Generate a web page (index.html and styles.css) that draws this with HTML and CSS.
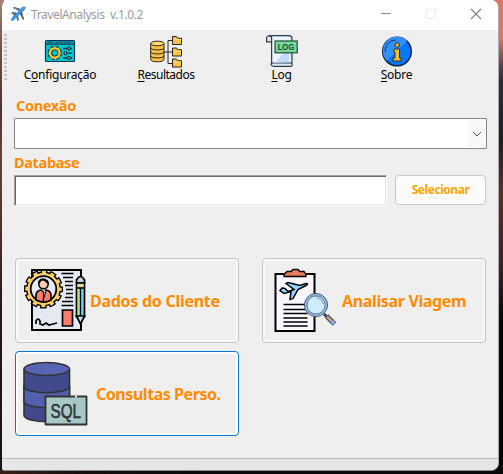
FILE: index.html
```html
<!DOCTYPE html>
<html lang="pt-BR">
<head>
<meta charset="utf-8">
<title>TravelAnalysis</title>
<link rel="stylesheet" href="styles.css">
</head>
<body>
<main class="window">
  <header class="titlebar">
    <svg class="app-icon" viewBox="0 0 16 16"><path d="M1 14 4 9 1 7 3 6 7 7 9 5 3 2 4 1 11 3 14 .8 15.5 1 15 3 12 6 14 13 13 14 10 8 8 10 9 14 7.5 15 6 11Z" fill="#344556"/><path d="M2.5 13.5 13.5 2" stroke="#3b9af0" stroke-width="3" stroke-linecap="round"/><path d="m4 2 6 2M12 7l1 5M2 7l3 1M7 11l1 3" stroke="#7894a7"/></svg>
    <h1 class="title">TravelAnalysis&nbsp; v.1.0.2</h1>
    <div class="controls">
      <svg viewBox="0 0 10 10"><path d="M0 4.5h10" stroke="#8a8a8a"/></svg>
      <svg viewBox="0 0 10 10"><rect x=".5" y=".5" width="9" height="9" rx="1" fill="none" stroke="#e9e9e9"/></svg>
      <svg viewBox="0 0 10 10"><path d="m0 0 10 10M10 0 0 10" stroke="#828282" stroke-width="1.1"/></svg>
    </div>
  </header>

  <nav class="toolbar">
    <span class="grip"></span>
    <button class="tool tool-config">
      <svg viewBox="0 0 32 32"><rect x="1.5" y="5.500" width="29" height="21" rx="1" fill="#00c8cc" stroke="#073654" stroke-width="1.2"/><path d="M2 6h28v3H2z" fill="#00969f"/><path d="M2 9.3h28" stroke="#073654"/><path d="M4 7.5h5M12 7.5h16" stroke="#06405a" stroke-dasharray="1 1"/><circle cx="10.8" cy="18" r="5.5" fill="none" stroke="#163e52" stroke-width="3.5" stroke-dasharray="2.7 1.62"/><circle cx="10.8" cy="18" r="4.1" fill="#00c8cc" stroke="#163e52" stroke-width="4"/><circle cx="10.8" cy="18" r="4.8" fill="none" stroke="#ffc72d" stroke-width="2.4"/><circle cx="10.8" cy="18" r="2.9" fill="#00c8cc" stroke="#163e52" stroke-width=".7"/><path d="M19 13.5h9M19 18.2h9M19 23h9" stroke="#073654" stroke-width="1.3"/><path d="M24 12h2v3h-2zM20.5 16.7h2v3h-2zM24 21.5h2v3h-2z" fill="#ffc72d" stroke="#073654"/></svg>
      <span>C<u>o</u>nfiguração</span>
    </button>
    <button class="tool tool-results">
      <svg viewBox="0 0 32 32"><g stroke="#29251d" stroke-width="1" fill="#fcc444"><path d="M.7 8.5v16c0 3 13.3 3 13.3 0v-16"/><ellipse cx="7.35" cy="8.5" rx="6.65" ry="2.3" fill="#ffdc72"/><path d="M.7 12.7c0 3 13.3 3 13.3 0M.7 16.7c0 3 13.3 3 13.3 0M.7 20.7c0 3 13.3 3 13.3 0" fill="none"/><path d="M14 17h8M22 5.5h-4v23h4" fill="none"/><path id="folder" d="M22.5 1.5h4l1 1.7h4v6.3h-9z"/><use href="#folder" y="11.5"/><use href="#folder" y="22.500"/></g><path d="M24 4.500h7M24 16h7M24 27h7" stroke="#ffe18a"/></svg>
      <span><u>R</u>esultados</span>
    </button>
    <button class="tool tool-log">
      <svg viewBox="0 0 32 32"><path d="M5.500 6.800H.6V3c0-3 5-2.500 5 0v25h19c2 0 2.400 3.400 0 3.400H8c-3.500 0-4-3.400-1.500-3.400M3 .7h20c2.500 0 3 1.300 3 3V28h-3" fill="#d9eaff" stroke="#343c48" stroke-width="1.200"/><path d="M7 2h17v25H7z" fill="#edf6ff"/><path d="M8 28 23 13v14z" fill="#c3dcfa"/><rect x="9" y="6" width="22.200" height="11.800" fill="#77d99a" stroke="#224d38" stroke-width="1.200"/><text x="11.700" y="15.100" font-size="8.800" textLength="16.500" lengthAdjust="spacingAndGlyphs">LOG</text></svg>
      <span><u>L</u>og</span>
    </button>
    <button class="tool tool-about">
      <svg viewBox="0 0 32 32"><circle cx="16" cy="16.500" r="14.300" fill="#0876f9" stroke="#10284a" stroke-width="1.500"/><path d="M6 26A14 14 0 0 1 26 6Z" fill="#3291ff"/><path d="M4 17c0-7 5-12 11-12" fill="none" stroke="#0c3266"/><circle cx="16.200" cy="10" r="2.200" fill="#ffc21c" stroke="#172b46"/><path d="M13 14h5.500v9h1.500v3h-8v-3h2v-6h-1z" fill="#ffc21c" stroke="#172b46" stroke-linejoin="round"/></svg>
      <span><u>S</u>obre</span>
    </button>
  </nav>

  <section class="form">
    <label class="field-label label-connection"><span>Conexão</span></label>
    <div class="combo"><span class="combo-arrow"><svg viewBox="0 0 10 6"><path d="m1 1 4 4 4-4" fill="none" stroke="#555"/></svg></span></div>
    <label class="field-label label-database"><span>Database</span></label>
    <div class="path-row"><input class="path" aria-label="Database"><button class="select">Selecionar</button></div>
  </section>

  <section class="actions">
    <button class="action action-client">
      <svg viewBox="0 0 70 70"><path d="M12 6h49v60H12z" fill="#e5e9f2" stroke="#000" stroke-width="2"/><path d="M41.500 9.500h12M43 13.500h10M45 17.500h8M45 21.500h8M46 25.500h7M46 29.500h7M45 33.500h8M42 37.500h11M41.500 41.500h12" stroke="#000" stroke-width="1.700"/><path d="M42.500 46h10v16h-10z" fill="#ff7c68" stroke="#000" stroke-width="1.700"/><circle cx="23.500" cy="25" r="16.800" fill="none" stroke="#000" stroke-width="5.500" stroke-dasharray="6.300 2.496" stroke-dashoffset="3.150"/><circle cx="23.500" cy="25" r="16" fill="#ffd067" stroke="#000" stroke-width="3"/><circle cx="23.500" cy="25" r="16.200" fill="none" stroke="#ffd067" stroke-width="4" stroke-dasharray="3.900 4.582" stroke-dashoffset="1.950"/><circle cx="23.500" cy="25" r="14.800" fill="none" stroke="#ffd067" stroke-width="2.500"/><circle cx="23.500" cy="25" r="12.800" fill="#e5e9f2" stroke="#000" stroke-width="1.800"/><path d="M16 36v-5q0-4 5-5l2.500 2 2.500-2q5 1 5 5v5q-7 4-15 0Z" fill="#ff7c68" stroke="#000" stroke-width="1.600"/><path d="m21 26 3 2-1 9 3-10" fill="#fff" stroke="#000"/><circle cx="23.500" cy="20" r="4.700" fill="#ffcbb3" stroke="#000" stroke-width="1.600"/><path d="M19 19q1-5 6-3l3 3" fill="none" stroke="#000" stroke-width="2"/><path d="M16 60v-3q2-4 4 0v3l3 1 3-2 3 2 4-1 4-1" fill="none" stroke="#000" stroke-width="1.700"/><path d="M56.500 19V16q4-7 8 0v3z" fill="#cbd1df" stroke="#000" stroke-width="1.700"/><path d="M56.500 19h8v34h-8z" fill="#64d5f3" stroke="#000" stroke-width="1.700"/><path d="M57.500 24h3v28h-3z" fill="#aedd75"/><path d="M60.500 24v28M56.500 24h8" stroke="#000" stroke-width="1.300"/><path d="M57.500 20h6v3h-6z" fill="#ffd37a"/><path d="M56.500 52h8l-4 8z" fill="#d4d9e5" stroke="#000" stroke-width="1.700"/></svg>
      <span>Dados do Cliente</span>
    </button>
    <button class="action action-trip">
      <svg viewBox="0 0 70 70"><path d="M8.500 10h39v57h-39z" fill="#f9f6fd" stroke="#000" stroke-width="2"/><path d="M17 12.500v-2l3-3h4l2-2h5l2 2h4l2 3v2z" fill="#e57e5b" stroke="#000" stroke-width="1.300"/><path d="m15 24 3 .5 3 3 6-2-8-6 2-1 12 3 6-2q3 0 0 2l-8 4-5 9-3 1 1-8-7 2-4-3z" fill="#91d5ff" stroke="#000" stroke-width="1.500"/><path d="M16.500 40.500H39M16.500 45.500h22M16.500 49.500h24M16.500 54h24M16.500 58h24M16.500 62h24" stroke="#000" stroke-width="1.500"/><circle cx="49" cy="41" r="11.500" fill="#ceecff" stroke="#30486b"/><circle cx="49" cy="41" r="10" fill="#ceecff" stroke="#87aed2" stroke-width="1.300"/><circle cx="49" cy="41" r="9" fill="none" stroke="#345072" stroke-width=".7"/><path d="M49 34q6 0 7 6" fill="none" stroke="#7592ab"/><path d="m57 50 3 3" stroke="#34495e" stroke-width="3"/><path d="m59.500 52 8 8" stroke="#30486b" stroke-width="5"/><path d="m60 52.500 5 5" stroke="#c99b80" stroke-width="3"/><path d="m65 57.500 2 2" stroke="#8dbce8" stroke-width="3.500"/></svg>
      <span>Analisar Viagem</span>
    </button>
    <button class="action action-query">
      <svg viewBox="0 0 70 70"><g stroke="#333337" stroke-width="1.600" stroke-linejoin="round"><path d="M4 12v46c0 9 45.500 9 45.500 0V12" fill="#414b8b"/><path d="M4 29c0 9 45.500 9 45.500 0v15c0 9-45.500 9-45.500 0z" fill="#5260b0"/><ellipse cx="26.750" cy="12" rx="22.750" ry="6.500" fill="#5964b5"/><path d="M25.500 39.500h41v28h-41z" fill="#a8c8c5" stroke-width="1.800"/></g><text x="30.500" y="60.500" font-size="20" textLength="30.500" lengthAdjust="spacingAndGlyphs">SQL</text><path d="M55 39.500h2" stroke="#efefef" stroke-width="2"/></svg>
      <span>Consultas Perso.</span>
    </button>
  </section>
  <footer class="status"></footer>
</main>
</body>
</html>
```
FILE: styles.css
```css
* { box-sizing: border-box; }

body {
  width: 503px;
  height: 474px;
  margin: 0;
  padding: 0 4px 3px 2px;
  overflow: hidden;
  font-family: "Noto Sans", sans-serif;
  background:
    linear-gradient(90deg, #392017 0, #180f0e 80px, #090909 200px) bottom / 100% 4px no-repeat,
    linear-gradient(#a98577 0, #7b6961 28px, #70483e 60px, #49342f 110px, #65443b 150px, #55332d 220px, #261b19 300px, #151212) left / 4px 100% no-repeat,
    linear-gradient(#d87860 0, #d87860 38px, #594451 65px, #302a38 82px, #211c23 140px, #573128 190px, #35221f 270px, #080808 320px, #050808) right / 12px 100% no-repeat;
}

button { margin: 0; padding: 0; font-family: inherit; }

svg { display: block; overflow: visible; fill: none; }

.window {
  display: flex;
  flex-direction: column;
  height: 471px;
  overflow: hidden;
  background: #efefef;
  border-right: 1px solid #aaa;
  border-bottom: 1px solid #8c8c8c;
  border-radius: 7px 8px 8px 3px;
}

.titlebar {
  display: flex;
  flex: none;
  align-items: center;
  height: 30px;
  padding: 0 14px 2px 8px;
  background: #fff;
}

.app-icon { width: 16px; height: 16px; }

.title {
  margin: 2px 0 0 5px;
  font-size: 12px;
  font-weight: 400;
  line-height: 16px;
  letter-spacing: -0.4px;
  color: #999;
  white-space: pre;
}

.controls { display: flex; gap: 35px; margin-left: auto; padding-right: 3px; }
.controls svg { width: 10px; height: 10px; }

.toolbar {
  display: grid;
  grid-template-columns: 4px 104px 108px 123px 107px;
  flex: none;
  height: 60px;
  padding-left: 2px;
}

.grip {
  width: 3px;
  height: 48px;
  margin-top: 4px;
  background: repeating-linear-gradient(#c2c2c2 0 2px, transparent 2px 4px);
}

.tool {
  display: flex;
  flex-direction: column;
  align-items: center;
  padding-top: 5px;
  font-size: 12px;
  line-height: 16px;
  letter-spacing: -0.25px;
  color: #000;
  background: none;
  border: 0;
}

.tool svg { width: 32px; height: 32px; margin-bottom: 0; }
.tool span { white-space: nowrap; }
.tool u { text-underline-offset: 2px; }
.tool svg text { fill: #224832; font-family: "Liberation Sans", sans-serif; font-weight: 700; letter-spacing: 0; }
.tool-results { letter-spacing: -0.5px; }
.tool-results svg { margin-left: 0; }

.form { flex: none; padding: 4px 11px 0 12px; }

.field-label {
  display: flex;
  align-items: center;
  height: 24px;
  padding-bottom: 2px;
  font-size: 14.5px;
  font-weight: 700;
  letter-spacing: -0.35px;
  color: #ff8c00;
}

.label-connection { padding-left: 2px; }
.label-database { height: 26px; padding-bottom: 0; }

.combo {
  display: flex;
  justify-content: flex-end;
  height: 31px;
  padding: 1px;
  background: #fff;
  border: 1px solid #858585;
  border-radius: 1px;
}

.combo-arrow {
  display: grid;
  place-items: center;
  width: 17px;
  background: #f8f8f8;
}

.combo-arrow svg { width: 10px; height: 6px; }

.path-row { display: flex; gap: 8px; padding-right: 1px; }

.path {
  flex: 1;
  min-width: 0;
  height: 31px;
  padding: 0 4px;
  background: #fff;
  border: 1px solid;
  border-color: #a0a0a0 #fff #fff #a0a0a0;
  box-shadow: inset 1px 1px #696969, inset -1px -1px #e3e3e3;
}

.select {
  width: 91px;
  height: 30px;
  padding-bottom: 1px;
  font-size: 12px;
  font-weight: 700;
  letter-spacing: -0.45px;
  color: #ffa500;
  background: #fcfcfc;
  border: 1px solid #c7c7c7;
  border-radius: 4px;
}

.actions {
  display: grid;
  grid-template-columns: 224px 224px;
  gap: 8px 23px;
  flex: none;
  margin-top: 52px;
  padding-left: 13px;
}

.action {
  display: flex;
  align-items: center;
  height: 85px;
  padding-left: 4px;
  font-size: 16px;
  font-weight: 700;
  letter-spacing: -0.27px;
  color: #ff8c00;
  text-align: left;
  background: #efefef;
  border: 1px solid #c4c4c4;
  border-radius: 4px;
  box-shadow: inset 0 0 0 2px #fafafa;
}

.action svg { flex: none; width: 70px; height: 70px; margin-bottom: 3px; }
.action span { white-space: nowrap; }
.action svg text { fill: #333337; font-family: "Liberation Sans", sans-serif; font-weight: 400; letter-spacing: 0; stroke: #333337; stroke-width: 0.6px; }
.action-trip span { margin-left: 5px; letter-spacing: -0.35px; }
.action-query span { margin-left: 6px; letter-spacing: -0.45px; }
.action-query { border-color: #0078d4; box-shadow: inset 0 0 0 2px #fff; }

.status {
  height: 12px;
  margin-top: auto;
  background: #e6e6e6;
  border-top: 1px solid #bbb;
}
```
